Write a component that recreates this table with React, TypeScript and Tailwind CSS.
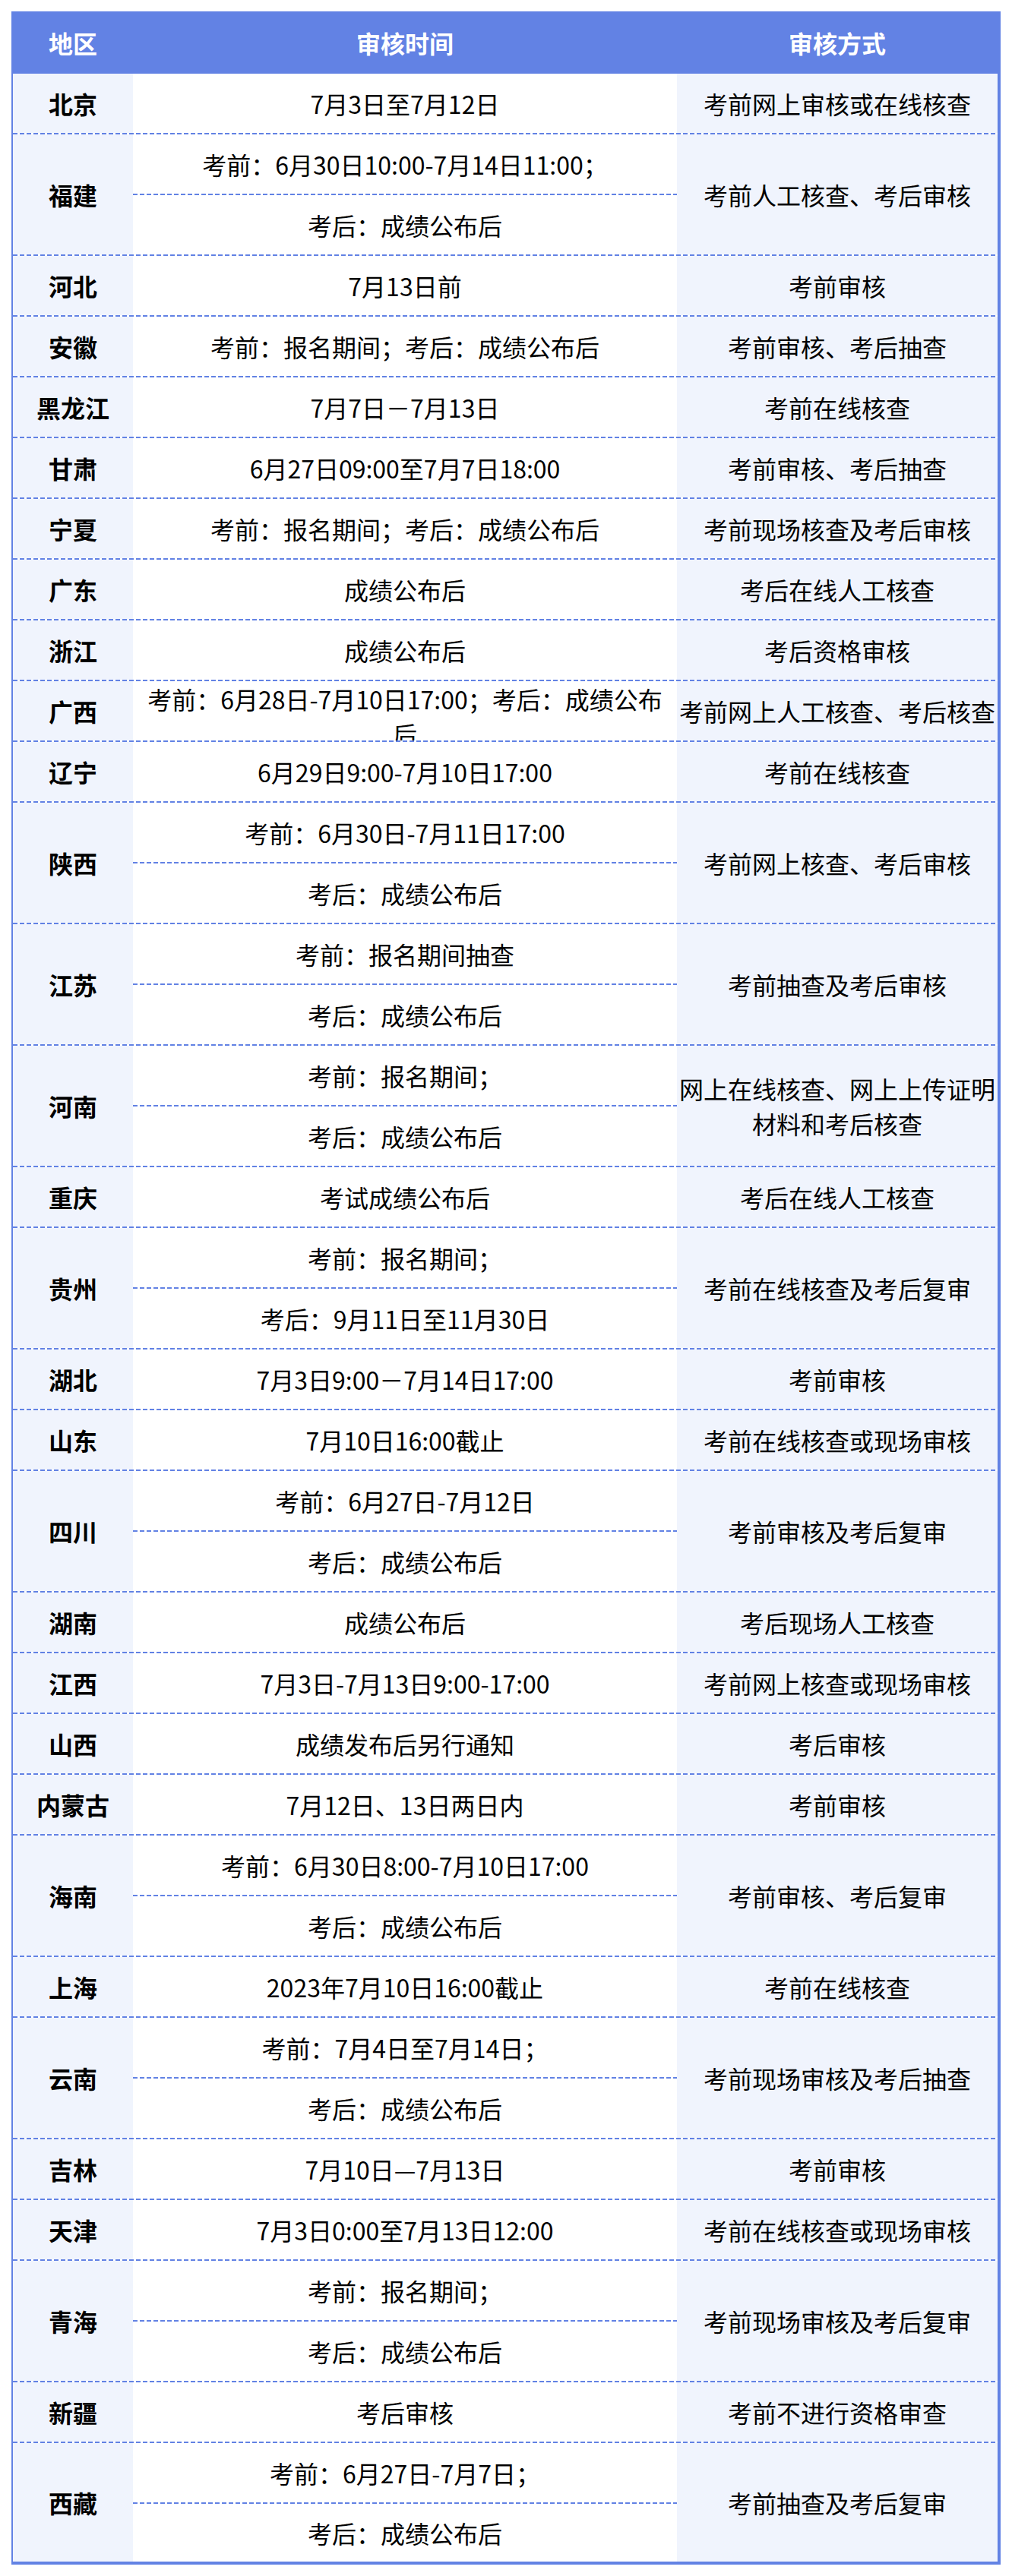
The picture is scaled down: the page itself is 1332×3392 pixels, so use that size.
type Row = {
  region: string;
  times: string[];
  method: string;
};

const rows: Row[] = [
  { region: "北京", times: ["7月3日至7月12日"], method: "考前网上审核或在线核查" },
  { region: "福建", times: ["考前：6月30日10:00-7月14日11:00；", "考后：成绩公布后"], method: "考前人工核查、考后审核" },
  { region: "河北", times: ["7月13日前"], method: "考前审核" },
  { region: "安徽", times: ["考前：报名期间；考后：成绩公布后"], method: "考前审核、考后抽查" },
  { region: "黑龙江", times: ["7月7日－7月13日"], method: "考前在线核查" },
  { region: "甘肃", times: ["6月27日09:00至7月7日18:00"], method: "考前审核、考后抽查" },
  { region: "宁夏", times: ["考前：报名期间；考后：成绩公布后"], method: "考前现场核查及考后审核" },
  { region: "广东", times: ["成绩公布后"], method: "考后在线人工核查" },
  { region: "浙江", times: ["成绩公布后"], method: "考后资格审核" },
  { region: "广西", times: ["考前：6月28日-7月10日17:00；考后：成绩公布后"], method: "考前网上人工核查、考后核查" },
  { region: "辽宁", times: ["6月29日9:00-7月10日17:00"], method: "考前在线核查" },
  { region: "陕西", times: ["考前：6月30日-7月11日17:00", "考后：成绩公布后"], method: "考前网上核查、考后审核" },
  { region: "江苏", times: ["考前：报名期间抽查", "考后：成绩公布后"], method: "考前抽查及考后审核" },
  { region: "河南", times: ["考前：报名期间；", "考后：成绩公布后"], method: "网上在线核查、网上上传证明材料和考后核查" },
  { region: "重庆", times: ["考试成绩公布后"], method: "考后在线人工核查" },
  { region: "贵州", times: ["考前：报名期间；", "考后：9月11日至11月30日"], method: "考前在线核查及考后复审" },
  { region: "湖北", times: ["7月3日9:00－7月14日17:00"], method: "考前审核" },
  { region: "山东", times: ["7月10日16:00截止"], method: "考前在线核查或现场审核" },
  { region: "四川", times: ["考前：6月27日-7月12日", "考后：成绩公布后"], method: "考前审核及考后复审" },
  { region: "湖南", times: ["成绩公布后"], method: "考后现场人工核查" },
  { region: "江西", times: ["7月3日-7月13日9:00-17:00"], method: "考前网上核查或现场审核" },
  { region: "山西", times: ["成绩发布后另行通知"], method: "考后审核" },
  { region: "内蒙古", times: ["7月12日、13日两日内"], method: "考前审核" },
  { region: "海南", times: ["考前：6月30日8:00-7月10日17:00", "考后：成绩公布后"], method: "考前审核、考后复审" },
  { region: "上海", times: ["2023年7月10日16:00截止"], method: "考前在线核查" },
  { region: "云南", times: ["考前：7月4日至7月14日；", "考后：成绩公布后"], method: "考前现场审核及考后抽查" },
  { region: "吉林", times: ["7月10日—7月13日"], method: "考前审核" },
  { region: "天津", times: ["7月3日0:00至7月13日12:00"], method: "考前在线核查或现场审核" },
  { region: "青海", times: ["考前：报名期间；", "考后：成绩公布后"], method: "考前现场审核及考后复审" },
  { region: "新疆", times: ["考后审核"], method: "考前不进行资格审查" },
  { region: "西藏", times: ["考前：6月27日-7月7日；", "考后：成绩公布后"], method: "考前抽查及考后复审" },
];

// 虚线分隔
function Dash() {
  return <div className="h-[2px] shrink-0 bg-[repeating-linear-gradient(90deg,#6282e4_0_6px,transparent_6px_9px)]" />;
}

function TableRow({ row, last }: { row: Row; last: boolean }) {
  return (
    <div>
      <div className="flex">
        <div className="w-[158px] shrink-0 bg-[#f0f4fd] flex items-center justify-center font-bold leading-[46px]">
          {row.region}
        </div>
        <div className="w-[716px] shrink-0 flex flex-col">
          {row.times.map((t, i) => {
            const isLast = i === row.times.length - 1;
            return (
              <div key={i} className="flex flex-col">
                <div
                  className={
                    last && isLast
                      ? "h-[76px] overflow-hidden flex flex-col px-2"
                      : "h-[78px] overflow-hidden flex flex-col px-2"
                  }
                >
                  <p className="my-auto text-center leading-[46px]">{t}</p>
                </div>
                {!isLast && <Dash />}
              </div>
            );
          })}
        </div>
        <div className="flex-1 bg-[#f0f4fd] flex items-center justify-center text-center px-[2px] leading-[46px]">
          {row.method}
        </div>
      </div>
      {last ? <div className="h-[4px] bg-[#6282e4]" /> : <Dash />}
    </div>
  );
}

export default function App() {
  return (
    <div className="bg-white pt-[15px] pb-[15px] pl-[15px] font-['Noto_Sans_CJK_SC','Noto_Sans',sans-serif] text-[32px] text-black">
      <div className="w-[1302px] border-l-2 border-r-4 border-[#6282e4]">
        {/* 表头 */}
        <div className="flex h-[82px] bg-[#6282e4] text-white font-bold">
          <div className="w-[158px] flex items-center justify-center">地区</div>
          <div className="w-[716px] flex items-center justify-center">审核时间</div>
          <div className="flex-1 flex items-center justify-center">审核方式</div>
        </div>
        {rows.map((r, i) => (
          <TableRow key={r.region} row={r} last={i === rows.length - 1} />
        ))}
      </div>
    </div>
  );
}
